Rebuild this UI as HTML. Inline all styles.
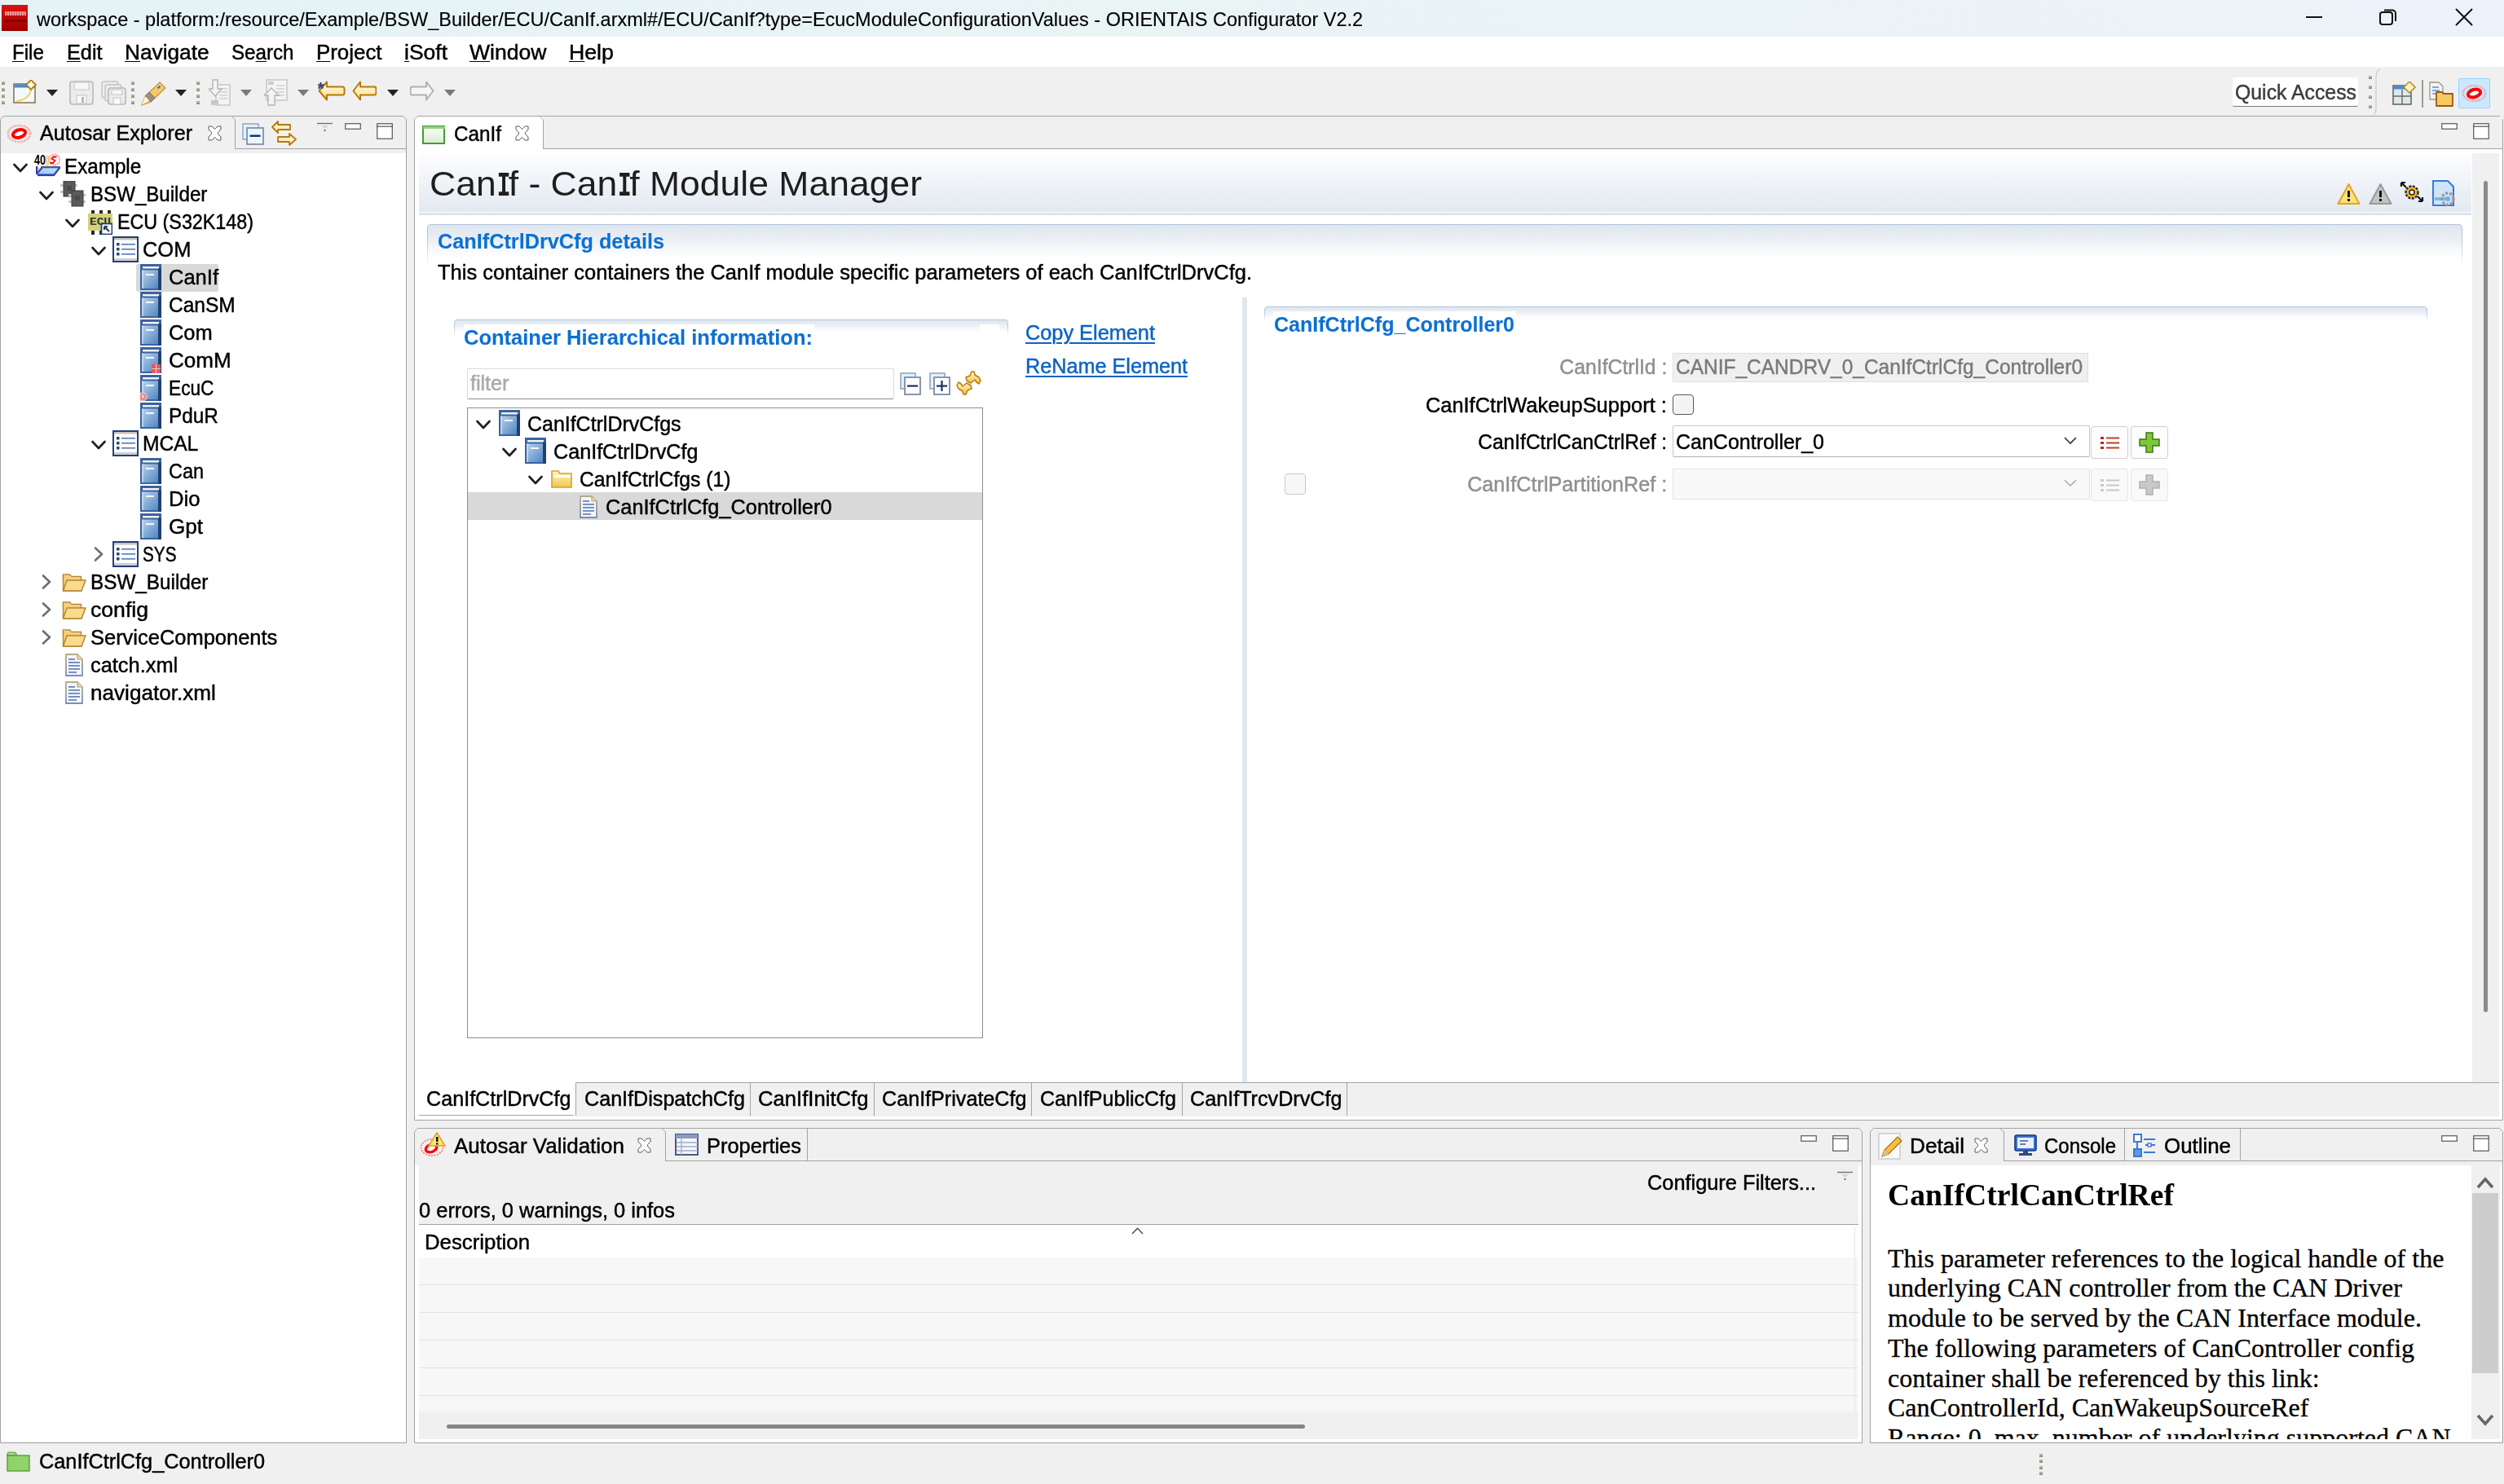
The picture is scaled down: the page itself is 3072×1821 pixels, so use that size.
<!DOCTYPE html>
<html><head><meta charset="utf-8"><title>ORIENTAIS Configurator</title><style>
html,body{margin:0;padding:0;}
body{width:3072px;height:1821px;position:relative;overflow:hidden;background:#f0f0f0;font-family:"Liberation Sans",sans-serif;}
body>div,body>svg{position:absolute;}
.t{position:absolute;white-space:pre;-webkit-text-stroke:0.45px currentColor;}
u{text-decoration-thickness:1.3px;text-underline-offset:1.5px;}
.mi{font-family:"Liberation Mono",monospace;font-weight:bold;letter-spacing:-9px;margin-left:-2px;display:inline-block;transform:scaleX(0.62);}
#t1{transform:scaleX(0.9783);}
#t2{transform:scaleX(0.9653);}
#t3{transform:scaleX(1.0094);}
#t4{transform:scaleX(1.0488);}
#t5{transform:scaleX(0.9655);}
#t6{transform:scaleX(1.0343);}
#t7{transform:scaleX(1.0590);}
#t8{transform:scaleX(1.0625);}
#t9{transform:scaleX(1.0673);}
#t10{transform:scaleX(0.9929);}
#t11{transform:scaleX(1.0043);}
#t12{transform:scaleX(0.9685);}
#t13{transform:scaleX(0.9639);}
#t14{transform:scaleX(0.9311);}
#t15{transform:scaleX(1.0167);}
#t16{transform:scaleX(1.0207);}
#t17{transform:scaleX(0.9799);}
#t18{transform:scaleX(1.0171);}
#t19{transform:scaleX(1.0406);}
#t20{transform:scaleX(0.9077);}
#t21{transform:scaleX(0.9721);}
#t22{transform:scaleX(0.9832);}
#t23{transform:scaleX(0.9373);}
#t24{transform:scaleX(1.0262);}
#t25{transform:scaleX(1.0398);}
#t26{transform:scaleX(0.8295);}
#t27{transform:scaleX(0.9713);}
#t28{transform:scaleX(1.0642);}
#t29{transform:scaleX(1.0185);}
#t30{transform:scaleX(1.0152);}
#t31{transform:scaleX(1.0441);}
#t32{transform:scaleX(0.9705);}
#t33{transform:scaleX(1.0595);}
#t34{transform:scaleX(1.0107);}
#t35{transform:scaleX(1.0198);}
#t36{transform:scaleX(1.0202);}
#t38{transform:scaleX(0.9978);}
#t39{transform:scaleX(1.0061);}
#t40{transform:scaleX(0.9891);}
#t41{transform:scaleX(1.0138);}
#t42{transform:scaleX(1.0125);}
#t43{transform:scaleX(1.0086);}
#t44{transform:scaleX(1.0018);}
#t45{transform:scaleX(0.9897);}
#t46{transform:scaleX(0.9795);}
#t47{transform:scaleX(1.0176);}
#t48{transform:scaleX(0.9823);}
#t49{transform:scaleX(0.9997);}
#t50{transform:scaleX(1.0076);}
#t51{transform:scaleX(1.0061);}
#t52{transform:scaleX(1.0054);}
#t53{transform:scaleX(1.0264);}
#t54{transform:scaleX(1.0058);}
#t55{transform:scaleX(1.0015);}
#t56{transform:scaleX(1.0069);}
#t57{transform:scaleX(1.0395);}
#t58{transform:scaleX(1.0180);}
#t59{transform:scaleX(1.0135);}
#t60{transform:scaleX(1.0179);}
#t61{transform:scaleX(1.0315);}
#t62{transform:scaleX(1.0482);}
#t63{transform:scaleX(0.9593);}
#t64{transform:scaleX(1.0351);}
#dethead{transform:scaleX(0.9898);}
#t65{transform:scaleX(1.0120);}
</style></head><body>
<div style="left:0px;top:0px;width:3072px;height:45px;background:linear-gradient(90deg,#e5f3f6 0%,#e9f4f5 45%,#ecf2f9 100%)"></div>
<div style="left:2px;top:6px;width:32px;height:32px;background:linear-gradient(#e01010,#9a0000)"></div>
<div style="left:6px;top:14px;width:26px;height:5px;background:repeating-linear-gradient(90deg,#f7c8c8 0 2px,#e26a6a 2px 3px);opacity:.75"></div>
<div style="left:6px;top:24px;width:26px;height:3px;background:repeating-linear-gradient(90deg,#5a0000 0 2px,#a00000 2px 3px);opacity:.8"></div>
<div id="t1" class="t " style="left:45px;transform-origin:left top;top:11.68px;font-size:24px;line-height:24px;color:#000;font-weight:normal;font-family:'Liberation Sans', sans-serif;-webkit-text-stroke:0.15px currentColor">workspace - platform:/resource/Example/BSW_Builder/ECU/CanIf.arxml#/ECU/CanIf?type=EcucModuleConfigurationValues - ORIENTAIS Configurator V2.2</div>
<div style="left:2829px;top:20px;width:20px;height:2px;background:#111"></div>
<svg style="position:absolute;left:2918px;top:9px;" width="24" height="24" viewBox="0 0 24 24"><rect x="2" y="6" width="15" height="15" rx="3" fill="none" stroke="#111" stroke-width="2"/><path d="M7,3.5 H17 a4,4 0 0 1 4,4 V17" fill="none" stroke="#111" stroke-width="2"/></svg>
<svg style="position:absolute;left:3012px;top:10px;" width="22" height="22" viewBox="0 0 22 22"><path d="M1,1 L21,21 M21,1 L1,21" stroke="#111" stroke-width="2"/></svg>
<div style="left:0px;top:45px;width:3072px;height:37px;background:#fff"></div>
<div id="t2" class="t " style="left:14.5px;transform-origin:left top;top:52.14px;font-size:25px;line-height:25px;color:#000;font-weight:normal;font-family:'Liberation Sans', sans-serif;"><u>F</u>ile</div>
<div id="t3" class="t " style="left:81.5px;transform-origin:left top;top:52.14px;font-size:25px;line-height:25px;color:#000;font-weight:normal;font-family:'Liberation Sans', sans-serif;"><u>E</u>dit</div>
<div id="t4" class="t " style="left:152.7px;transform-origin:left top;top:52.14px;font-size:25px;line-height:25px;color:#000;font-weight:normal;font-family:'Liberation Sans', sans-serif;"><u>N</u>avigate</div>
<div id="t5" class="t " style="left:283.7px;transform-origin:left top;top:52.14px;font-size:25px;line-height:25px;color:#000;font-weight:normal;font-family:'Liberation Sans', sans-serif;">Se<u>a</u>rch</div>
<div id="t6" class="t " style="left:388px;transform-origin:left top;top:52.14px;font-size:25px;line-height:25px;color:#000;font-weight:normal;font-family:'Liberation Sans', sans-serif;"><u>P</u>roject</div>
<div id="t7" class="t " style="left:496px;transform-origin:left top;top:52.14px;font-size:25px;line-height:25px;color:#000;font-weight:normal;font-family:'Liberation Sans', sans-serif;"><u>i</u>Soft</div>
<div id="t8" class="t " style="left:576px;transform-origin:left top;top:52.14px;font-size:25px;line-height:25px;color:#000;font-weight:normal;font-family:'Liberation Sans', sans-serif;"><u>W</u>indow</div>
<div id="t9" class="t " style="left:698px;transform-origin:left top;top:52.14px;font-size:25px;line-height:25px;color:#000;font-weight:normal;font-family:'Liberation Sans', sans-serif;"><u>H</u>elp</div>
<div style="left:0px;top:82px;width:3072px;height:1739px;background:#f0f0f0"></div>
<div style="left:2px;top:100px;width:4px;height:4px;background:linear-gradient(#c4bfae,#8a8470)"></div>
<div style="left:2px;top:108px;width:4px;height:4px;background:linear-gradient(#c4bfae,#8a8470)"></div>
<div style="left:2px;top:116px;width:4px;height:4px;background:linear-gradient(#c4bfae,#8a8470)"></div>
<div style="left:2px;top:124px;width:4px;height:4px;background:linear-gradient(#c4bfae,#8a8470)"></div>
<svg style="position:absolute;left:16px;top:98px;" width="30" height="30" viewBox="0 0 30 30"><rect x="1" y="5" width="26" height="23" fill="#f4f9fe" stroke="#8a7a50" stroke-width="1.6"/><rect x="1.5" y="5.5" width="25" height="4" fill="#4a8ad0"/><path d="M4,26 Q20,24 22,12" fill="none" stroke="#f0d070" stroke-width="2"/><path d="M22,0 L28,6 L22,12 L16,6 Z" fill="#f5dc8c" stroke="#a07a18" stroke-width="1.6"/><path d="M22,2.5 V9.5 M18.5,6 H25.5" stroke="#fff" stroke-width="1.6"/></svg>
<svg style="position:absolute;left:57px;top:110px;" width="14" height="8" viewBox="0 0 14 8"><polygon points="0,0 14,0 7.0,8" fill="#222"/></svg>
<svg style="position:absolute;left:85px;top:99px;" width="30" height="30" viewBox="0 0 30 30"><rect x="1" y="1" width="28" height="28" rx="3" fill="#ececec" stroke="#b8b8b8" stroke-width="1.6"/><rect x="6" y="2" width="18" height="9" fill="#f7f7f7" stroke="#c4c4c4"/><rect x="9" y="18" width="12" height="10" fill="#f8f8f8" stroke="#c4c4c4"/><rect x="15" y="20" width="3" height="7" fill="#bbb"/></svg>
<svg style="position:absolute;left:124px;top:99px;" width="31" height="30" viewBox="0 0 31 30"><rect x="1" y="1" width="20" height="20" rx="3" fill="#ececec" stroke="#c4c4c4" stroke-width="1.4"/><rect x="5" y="5" width="20" height="20" rx="3" fill="#ececec" stroke="#c4c4c4" stroke-width="1.4"/><rect x="9" y="9" width="21" height="20" rx="3" fill="#ececec" stroke="#b8b8b8" stroke-width="1.6"/><rect x="13" y="11" width="13" height="6" fill="#f7f7f7" stroke="#c4c4c4"/><rect x="15" y="21" width="9" height="8" fill="#f8f8f8" stroke="#c4c4c4"/></svg>
<div style="left:161px;top:100px;width:4px;height:4px;background:linear-gradient(#c4bfae,#8a8470)"></div>
<div style="left:161px;top:108px;width:4px;height:4px;background:linear-gradient(#c4bfae,#8a8470)"></div>
<div style="left:161px;top:116px;width:4px;height:4px;background:linear-gradient(#c4bfae,#8a8470)"></div>
<div style="left:161px;top:124px;width:4px;height:4px;background:linear-gradient(#c4bfae,#8a8470)"></div>
<svg style="position:absolute;left:172px;top:98px;" width="33" height="32" viewBox="0 0 33 32"><path d="M2,31 L6,20 L24,3 L31,10 L13,27 Z" fill="#f5c86a" stroke="#c09040" stroke-width="1.2"/><path d="M6,20 L13,27 L18,22 L11,15 Z" fill="#9a9088" stroke="#776f68" stroke-width="1"/><path d="M2,31 L6,20 L11,25 Z" fill="#fff8d8"/><rect x="22" y="7" width="2" height="4" fill="#3060c0" transform="rotate(45 23 9)"/></svg>
<svg style="position:absolute;left:215px;top:110px;" width="14" height="8" viewBox="0 0 14 8"><polygon points="0,0 14,0 7.0,8" fill="#222"/></svg>
<div style="left:241px;top:100px;width:4px;height:4px;background:linear-gradient(#c4bfae,#8a8470)"></div>
<div style="left:241px;top:108px;width:4px;height:4px;background:linear-gradient(#c4bfae,#8a8470)"></div>
<div style="left:241px;top:116px;width:4px;height:4px;background:linear-gradient(#c4bfae,#8a8470)"></div>
<div style="left:241px;top:124px;width:4px;height:4px;background:linear-gradient(#c4bfae,#8a8470)"></div>
<svg style="position:absolute;left:256px;top:97px;" width="27" height="33" viewBox="0 0 27 33"><rect x="9" y="7" width="17" height="25" fill="#f4f4f4" stroke="#c4c4c4" stroke-width="1.4"/><path d="M13,12 h10 M13,16 h10 M13,20 h10 M13,24 h10" stroke="#d0d0d0" stroke-width="1.4"/><path d="M5,1 h6 v11 h5 l-8,9 l-8,-9 h5 Z" fill="#f4f4f4" stroke="#b4b4b4" stroke-width="1.4"/><rect x="3" y="26" width="9" height="6" fill="#c8c8c8"/></svg>
<svg style="position:absolute;left:295px;top:110px;" width="14" height="8" viewBox="0 0 14 8"><polygon points="0,0 14,0 7.0,8" fill="#7a7a7a"/></svg>
<svg style="position:absolute;left:324px;top:97px;" width="29" height="33" viewBox="0 0 29 33"><rect x="3" y="1" width="25" height="25" fill="#f4f4f4" stroke="#c4c4c4" stroke-width="1.4"/><rect x="5" y="3" width="7" height="4" fill="#ccc"/><path d="M15,8 h10 M15,12 h10 M15,16 h10 M15,20 h10" stroke="#d0d0d0" stroke-width="1.4"/><path d="M5,32 v-12 h-5 l9,-9 l9,9 h-5 v12 Z" fill="#f4f4f4" stroke="#b4b4b4" stroke-width="1.4"/></svg>
<svg style="position:absolute;left:365px;top:110px;" width="14" height="8" viewBox="0 0 14 8"><polygon points="0,0 14,0 7.0,8" fill="#7a7a7a"/></svg>
<svg style="position:absolute;left:390px;top:99px;" width="34" height="27" viewBox="0 0 34 27"><defs><linearGradient id="ag" x1="0" y1="0" x2="0" y2="1"><stop offset="0" stop-color="#fffbe8"/><stop offset="1" stop-color="#ffe08a"/></linearGradient></defs><path d="M11,1.5 L1.5,12.5 L11,23.5 V17.5 H30 Q32.5,17.5 32.5,15 V10 Q32.5,7.5 30,7.5 H11 Z" fill="url(#ag)" stroke="#b8780a" stroke-width="2" stroke-linejoin="round"/><text x="-1" y="17" font-family="Liberation Sans" font-size="22" font-weight="bold" fill="#2a4a8a">*</text></svg>
<svg style="position:absolute;left:432px;top:99px;" width="30" height="27" viewBox="0 0 30 27"><path d="M10,1.5 L1.5,12.5 L10,23.5 V17.5 H27 Q29.5,17.5 29.5,15 V10 Q29.5,7.5 27,7.5 H10 Z" fill="url(#ag)" stroke="#b8780a" stroke-width="2" stroke-linejoin="round"/></svg>
<svg style="position:absolute;left:475px;top:110px;" width="14" height="8" viewBox="0 0 14 8"><polygon points="0,0 14,0 7.0,8" fill="#222"/></svg>
<svg style="position:absolute;left:503px;top:99px;" width="30" height="27" viewBox="0 0 30 27"><path d="M20,1.5 L28.5,12.5 L20,23.5 V17.5 H3 Q0.5,17.5 0.5,15 V10 Q0.5,7.5 3,7.5 H20 Z" fill="#f6f6f6" stroke="#b0b0b0" stroke-width="2" stroke-linejoin="round"/></svg>
<svg style="position:absolute;left:545px;top:110px;" width="14" height="8" viewBox="0 0 14 8"><polygon points="0,0 14,0 7.0,8" fill="#7a7a7a"/></svg>
<div style="left:2739px;top:95px;width:154px;height:36px;background:#fff;border-bottom:1.5px solid #7a7a7a;box-sizing:border-box;border-radius:2px"></div>
<div id="t10" class="t " style="left:2742px;transform-origin:left top;top:100.84px;font-size:25px;line-height:25px;color:#3c3c3c;font-weight:normal;font-family:'Liberation Sans', sans-serif;">Quick Access</div>
<div style="left:2906px;top:93px;width:4px;height:4px;background:linear-gradient(#c4bfae,#8a8470)"></div>
<div style="left:2906px;top:105px;width:4px;height:4px;background:linear-gradient(#c4bfae,#8a8470)"></div>
<div style="left:2906px;top:117px;width:4px;height:4px;background:linear-gradient(#c4bfae,#8a8470)"></div>
<div style="left:2906px;top:129px;width:4px;height:4px;background:linear-gradient(#c4bfae,#8a8470)"></div>
<svg style="position:absolute;left:2912px;top:84px;" width="10" height="58" viewBox="0 0 10 58"><path d="M8,1 Q3,3 3,10 V48 Q3,55 0,57" fill="none" stroke="#c8c8c8" stroke-width="1.2"/></svg>
<svg style="position:absolute;left:2935px;top:100px;" width="30" height="30" viewBox="0 0 30 30"><rect x="1" y="5" width="22" height="23" fill="#dbe8f4" stroke="#6a6a5a" stroke-width="1.6"/><rect x="1.5" y="5.5" width="21" height="4" fill="#4a8ad0"/><path d="M12,10 V28 M1,18 H23" stroke="#6a6a5a" stroke-width="1.4"/><path d="M21,0 L28,7 L21,14 L14,7 Z" fill="#fff3c0" stroke="#b08a20" stroke-width="1.5"/></svg>
<div style="left:2971px;top:98px;width:2px;height:34px;background:#9a9a9a"></div>
<svg style="position:absolute;left:2980px;top:100px;" width="31" height="31" viewBox="0 0 31 31"><path d="M1,1 H12 L17,6 V22 H1 Z" fill="#f0f3f8" stroke="#a09878" stroke-width="1.3"/><path d="M4,7 h8 M4,11 h9 M4,15 h9" stroke="#6a8acb" stroke-width="1.4"/><path d="M9,13 h7 l2,2 h11 v15 H9 Z" fill="#f6c860" stroke="#9a5a10" stroke-width="1.8" stroke-linejoin="round"/></svg>
<div style="left:3016px;top:96px;width:39px;height:37px;background:#cce8ff;border:1px solid #99d1ff;box-sizing:border-box;border-radius:2px"></div>
<svg style="position:absolute;left:3020px;top:103px;" width="31" height="23" viewBox="0 0 31 23"><ellipse cx="15.5" cy="11.5" rx="13.8" ry="9.5" fill="none" stroke="#f59a9a" stroke-width="2.4" stroke-dasharray="1.6 1.2"/><ellipse cx="15.5" cy="11.5" rx="7.8" ry="4.6" fill="#fff" stroke="#f00" stroke-width="4" transform="rotate(-15 15.5 11.5)"/></svg>
<svg style="position:absolute;left:0px;top:142px;" width="499" height="1629" viewBox="0 0 499 1629"><path d="M0.5,1628.5 V4.5 L4.5,0.5 H494.5 L498.5,4.5 V1628.5 Z" fill="#f0f0f0" stroke="#a3a3a3" stroke-width="1"/></svg>
<div style="left:1px;top:188px;width:497px;height:1581px;background:#fff"></div>
<svg style="position:absolute;left:280px;top:142px;" width="12" height="42" viewBox="0 0 12 42"><path d="M4,0.5 L8.5,5 V40.5" fill="none" stroke="#a3a3a3" stroke-width="1"/></svg>
<div style="left:288px;top:182px;width:210px;height:1px;background:#a3a3a3"></div>
<svg style="position:absolute;left:8px;top:152px;" width="31" height="24" viewBox="0 0 31 24"><ellipse cx="15.5" cy="12" rx="13.8" ry="10" fill="none" stroke="#f59a9a" stroke-width="2.4" stroke-dasharray="1.6 1.2"/><ellipse cx="15.5" cy="12" rx="7.8" ry="4.6" fill="#fff" stroke="#f00" stroke-width="4" transform="rotate(-15 15.5 12)"/></svg>
<div id="t11" class="t " style="left:49px;transform-origin:left top;top:151.34px;font-size:25px;line-height:25px;color:#000;font-weight:normal;font-family:'Liberation Sans', sans-serif;">Autosar Explorer</div>
<svg style="position:absolute;left:254px;top:154px;" width="19" height="19" viewBox="0 0 19 19"><path d="M2,1 L6,1 L9.5,4.5 L13,1 L17,1 L17,5 L13.5,8.5 L13.5,10.5 L17,14 L17,18 L13,18 L9.5,14.5 L6,18 L2,18 L2,14 L5.5,10.5 L5.5,8.5 L2,5 Z" fill="#fff" stroke="#5a5a5a" stroke-width="1.0"/></svg>
<svg style="position:absolute;left:297px;top:151px;" width="27" height="27" viewBox="0 0 27 27"><rect x="1" y="1" width="19" height="19" fill="#dff3ff" stroke="#9aa8c4" stroke-width="1.6"/><rect x="6" y="6" width="20" height="20" fill="#e8f6ff" stroke="#8090ad" stroke-width="1.8"/><rect x="9.5" y="14.5" width="13" height="2.4" fill="#0a2f66"/></svg>
<svg style="position:absolute;left:332px;top:147px;" width="33" height="33" viewBox="0 0 33 33"><path d="M9,2 L2,9 L9,16 V12 H24 V6 H9 Z" fill="#fff1c0" stroke="#b8780a" stroke-width="1.8" stroke-linejoin="round"/><path d="M23,17 L31,24 L23,31 V27 H9 V21 H23 Z" fill="#fff1c0" stroke="#b8780a" stroke-width="1.8" stroke-linejoin="round"/></svg>
<svg style="position:absolute;left:389px;top:150px;" width="19" height="13" viewBox="0 0 19 13"><line x1="0" y1="1.5" x2="19" y2="1.5" stroke="#707070" stroke-width="1.4"/><polygon points="5,4 14,4 9.5,8" fill="#d4d4d4"/><rect x="8.5" y="9" width="2" height="2" fill="#707070"/></svg>
<svg style="position:absolute;left:423px;top:151px;" width="20" height="8" viewBox="0 0 20 8"><rect x="0.75" y="0.75" width="18.5" height="6.5" fill="#fff" stroke="#555" stroke-width="1.2"/></svg>
<svg style="position:absolute;left:462px;top:151px;" width="20" height="20" viewBox="0 0 20 20"><rect x="0.75" y="0.75" width="18.5" height="18.5" fill="#fff" stroke="#555" stroke-width="1.2"/><line x1="0" y1="4.2" x2="20" y2="4.2" stroke="#555" stroke-width="1.2"/></svg>
<svg style="position:absolute;left:16px;top:200px;" width="18" height="13.5" viewBox="0 0 18 13.5"><polyline points="1.5,2 9.0,10.0 16.5,2" fill="none" stroke="#1f1f1f" stroke-width="2.6" stroke-linecap="round" stroke-linejoin="round"/></svg>
<svg style="position:absolute;left:42px;top:187px;" width="32" height="30" viewBox="0 0 32 30"><defs><linearGradient id="pg" x1="0" y1="1" x2="1" y2="0"><stop offset="0" stop-color="#9cc6f0"/><stop offset="1" stop-color="#b8e4fc"/></linearGradient></defs><rect x="14" y="4" width="4.5" height="13" fill="#f8dc98"/><text x="0" y="15" font-family="Liberation Sans" font-size="17" font-weight="bold" fill="#000" textLength="14" lengthAdjust="spacingAndGlyphs">40</text><circle cx="25" cy="9" r="6.5" fill="#fff" stroke="#ff8a8a" stroke-width="2.2" stroke-dasharray="1.6 1.1"/><path d="M27.5,5.5 h-4 l-2,2.5 l4,2 l-2.5,3 h-3.5" fill="none" stroke="#f00" stroke-width="1.8"/><polygon points="9,19.5 31,19.5 23,27 3,27" fill="url(#pg)"/><polygon points="3.5,19 8,19 3.5,24.5" fill="#f6d890"/><rect x="2" y="17" width="2.2" height="10" fill="#2c3fb0"/><rect x="8" y="17" width="24" height="2.4" fill="#4a55a0"/><line x1="9.5" y1="19" x2="3" y2="26.5" stroke="#3a48b0" stroke-width="2.2"/><line x1="31.5" y1="18.5" x2="24" y2="28" stroke="#3a48b0" stroke-width="2.4"/><rect x="4" y="26.5" width="21" height="2.6" fill="#2a3db8"/></svg>
<div id="t12" class="t " style="left:79px;transform-origin:left top;top:191.84px;font-size:25px;line-height:25px;color:#000;font-weight:normal;font-family:'Liberation Sans', sans-serif;">Example</div>
<svg style="position:absolute;left:48px;top:234px;" width="18" height="13.5" viewBox="0 0 18 13.5"><polyline points="1.5,2 9.0,10.0 16.5,2" fill="none" stroke="#1f1f1f" stroke-width="2.6" stroke-linecap="round" stroke-linejoin="round"/></svg>
<svg style="position:absolute;left:74px;top:222px;" width="32" height="32" viewBox="0 0 32 32"><rect x="0" y="4" width="4" height="3" fill="#c8c8c8"/><rect x="0" y="12" width="4" height="3" fill="#c8c8c8"/><rect x="17" y="4" width="4" height="3" fill="#c8c8c8"/><rect x="17" y="12" width="4" height="3" fill="#c8c8c8"/><rect x="4" y="0" width="14" height="19" fill="#5a5a5a" stroke="#3a3a3a" stroke-width="1"/><rect x="8" y="6" width="6" height="6" fill="#4a4a4a"/><rect x="10" y="16" width="4" height="3" fill="#c8c8c8"/><rect x="10" y="24" width="4" height="3" fill="#c8c8c8"/><rect x="27" y="16" width="4" height="3" fill="#c8c8c8"/><rect x="27" y="24" width="4" height="3" fill="#c8c8c8"/><rect x="14" y="12" width="14" height="19" fill="#5a5a5a" stroke="#3a3a3a" stroke-width="1"/><rect x="18" y="18" width="6" height="6" fill="#4a4a4a"/></svg>
<div id="t13" class="t " style="left:111px;transform-origin:left top;top:225.84px;font-size:25px;line-height:25px;color:#000;font-weight:normal;font-family:'Liberation Sans', sans-serif;">BSW_Builder</div>
<svg style="position:absolute;left:80px;top:268px;" width="18" height="13.5" viewBox="0 0 18 13.5"><polyline points="1.5,2 9.0,10.0 16.5,2" fill="none" stroke="#1f1f1f" stroke-width="2.6" stroke-linecap="round" stroke-linejoin="round"/></svg>
<svg style="position:absolute;left:108px;top:258px;" width="30" height="30" viewBox="0 0 30 30"><rect x="4" y="0" width="4" height="4" fill="#2a2a2a"/><rect x="14" y="0" width="4" height="4" fill="#2a2a2a"/><rect x="24" y="0" width="4" height="4" fill="#2a2a2a"/><rect x="4" y="25" width="4" height="5" fill="#2a2a2a"/><rect x="14" y="25" width="4" height="5" fill="#2a2a2a"/><rect x="0" y="4" width="30" height="21" fill="#d2d27a"/><text x="2" y="18" font-family="Liberation Mono" font-size="12" font-weight="bold" fill="#333" textLength="26" lengthAdjust="spacingAndGlyphs">ECU</text><rect x="16.5" y="16.5" width="13" height="13" fill="#fff" stroke="#22406e" stroke-width="1.8"/><path d="M20,20 L26,26 M20,20 h4 M20,20 v4" stroke="#22406e" stroke-width="2.2"/></svg>
<div id="t14" class="t " style="left:144px;transform-origin:left top;top:259.84px;font-size:25px;line-height:25px;color:#000;font-weight:normal;font-family:'Liberation Sans', sans-serif;">ECU (S32K148)</div>
<svg style="position:absolute;left:112px;top:302px;" width="18" height="13.5" viewBox="0 0 18 13.5"><polyline points="1.5,2 9.0,10.0 16.5,2" fill="none" stroke="#1f1f1f" stroke-width="2.6" stroke-linecap="round" stroke-linejoin="round"/></svg>
<svg style="position:absolute;left:138px;top:290px;" width="32" height="32" viewBox="0 0 32 32"><rect x="1" y="1" width="30" height="30" fill="#fff" stroke="#223f78" stroke-width="2"/><rect x="2" y="27" width="28" height="3" fill="#cfcfcf"/><rect x="2" y="2" width="28" height="2.5" fill="#c8c4bc"/><rect x="5" y="8" width="3.5" height="3.5" fill="#2c4577"/><rect x="11" y="9" width="17" height="1.6" fill="#5578b8"/><rect x="5" y="14" width="3.5" height="3.5" fill="#2c4577"/><rect x="11" y="15" width="17" height="1.6" fill="#5578b8"/><rect x="5" y="20" width="3.5" height="3.5" fill="#2c4577"/><rect x="11" y="21" width="17" height="1.6" fill="#5578b8"/></svg>
<div id="t15" class="t " style="left:175px;transform-origin:left top;top:293.84px;font-size:25px;line-height:25px;color:#000;font-weight:normal;font-family:'Liberation Sans', sans-serif;">COM</div>
<div style="left:167px;top:324px;width:101px;height:34px;background:#d9d9d9;border-radius:2px"></div>
<svg style="position:absolute;left:172px;top:324px;" width="26" height="32" viewBox="0 0 26 32"><defs><linearGradient id="mg" x1="0" y1="0" x2="1" y2="1"><stop offset="0" stop-color="#b9d3ec"/><stop offset="1" stop-color="#4f86c2"/></linearGradient></defs><rect x="0" y="0" width="26" height="32" fill="#3b62a0"/><rect x="2" y="7.5" width="20" height="22.5" fill="url(#mg)"/><rect x="2" y="7.5" width="2" height="22.5" fill="#cfe0f2" opacity=".7"/><rect x="3" y="3" width="20" height="2.5" fill="#eef3f8"/><rect x="7" y="12" width="10" height="2" fill="#f4f8fc"/><rect x="22" y="5.5" width="4" height="26.5" fill="#22406e"/></svg>
<div id="t16" class="t " style="left:207px;transform-origin:left top;top:327.84px;font-size:25px;line-height:25px;color:#000;font-weight:normal;font-family:'Liberation Sans', sans-serif;">CanIf</div>
<svg style="position:absolute;left:172px;top:358px;" width="26" height="32" viewBox="0 0 26 32"><defs><linearGradient id="mg" x1="0" y1="0" x2="1" y2="1"><stop offset="0" stop-color="#b9d3ec"/><stop offset="1" stop-color="#4f86c2"/></linearGradient></defs><rect x="0" y="0" width="26" height="32" fill="#3b62a0"/><rect x="2" y="7.5" width="20" height="22.5" fill="url(#mg)"/><rect x="2" y="7.5" width="2" height="22.5" fill="#cfe0f2" opacity=".7"/><rect x="3" y="3" width="20" height="2.5" fill="#eef3f8"/><rect x="7" y="12" width="10" height="2" fill="#f4f8fc"/><rect x="22" y="5.5" width="4" height="26.5" fill="#22406e"/></svg>
<div id="t17" class="t " style="left:207px;transform-origin:left top;top:361.84px;font-size:25px;line-height:25px;color:#000;font-weight:normal;font-family:'Liberation Sans', sans-serif;">CanSM</div>
<svg style="position:absolute;left:172px;top:392px;" width="26" height="32" viewBox="0 0 26 32"><defs><linearGradient id="mg" x1="0" y1="0" x2="1" y2="1"><stop offset="0" stop-color="#b9d3ec"/><stop offset="1" stop-color="#4f86c2"/></linearGradient></defs><rect x="0" y="0" width="26" height="32" fill="#3b62a0"/><rect x="2" y="7.5" width="20" height="22.5" fill="url(#mg)"/><rect x="2" y="7.5" width="2" height="22.5" fill="#cfe0f2" opacity=".7"/><rect x="3" y="3" width="20" height="2.5" fill="#eef3f8"/><rect x="7" y="12" width="10" height="2" fill="#f4f8fc"/><rect x="22" y="5.5" width="4" height="26.5" fill="#22406e"/></svg>
<div id="t18" class="t " style="left:207px;transform-origin:left top;top:395.84px;font-size:25px;line-height:25px;color:#000;font-weight:normal;font-family:'Liberation Sans', sans-serif;">Com</div>
<svg style="position:absolute;left:172px;top:426px;" width="26" height="32" viewBox="0 0 26 32"><defs><linearGradient id="mg" x1="0" y1="0" x2="1" y2="1"><stop offset="0" stop-color="#b9d3ec"/><stop offset="1" stop-color="#4f86c2"/></linearGradient></defs><rect x="0" y="0" width="26" height="32" fill="#3b62a0"/><rect x="2" y="7.5" width="20" height="22.5" fill="url(#mg)"/><rect x="2" y="7.5" width="2" height="22.5" fill="#cfe0f2" opacity=".7"/><rect x="3" y="3" width="20" height="2.5" fill="#eef3f8"/><rect x="7" y="12" width="10" height="2" fill="#f4f8fc"/><rect x="22" y="5.5" width="4" height="26.5" fill="#22406e"/><g transform="translate(14,21)"><rect x="0" y="0" width="11" height="11" fill="#e05a5a"/><path d="M5.5,0 V11 M0,5.5 H11" stroke="#f7c0c0" stroke-width="1.2"/></g></svg>
<div id="t19" class="t " style="left:207px;transform-origin:left top;top:429.84px;font-size:25px;line-height:25px;color:#000;font-weight:normal;font-family:'Liberation Sans', sans-serif;">ComM</div>
<svg style="position:absolute;left:172px;top:460px;" width="26" height="32" viewBox="0 0 26 32"><defs><linearGradient id="mg" x1="0" y1="0" x2="1" y2="1"><stop offset="0" stop-color="#b9d3ec"/><stop offset="1" stop-color="#4f86c2"/></linearGradient></defs><rect x="0" y="0" width="26" height="32" fill="#3b62a0"/><rect x="2" y="7.5" width="20" height="22.5" fill="url(#mg)"/><rect x="2" y="7.5" width="2" height="22.5" fill="#cfe0f2" opacity=".7"/><rect x="3" y="3" width="20" height="2.5" fill="#eef3f8"/><rect x="7" y="12" width="10" height="2" fill="#f4f8fc"/><rect x="22" y="5.5" width="4" height="26.5" fill="#22406e"/><circle cx="3" cy="27" r="5.2" fill="#e88" stroke="#fff" stroke-width="0.6"/><path d="M3,24 V27.5 H5" stroke="#fff" stroke-width="1.1" fill="none"/></svg>
<div id="t20" class="t " style="left:207px;transform-origin:left top;top:463.84px;font-size:25px;line-height:25px;color:#000;font-weight:normal;font-family:'Liberation Sans', sans-serif;">EcuC</div>
<svg style="position:absolute;left:172px;top:494px;" width="26" height="32" viewBox="0 0 26 32"><defs><linearGradient id="mg" x1="0" y1="0" x2="1" y2="1"><stop offset="0" stop-color="#b9d3ec"/><stop offset="1" stop-color="#4f86c2"/></linearGradient></defs><rect x="0" y="0" width="26" height="32" fill="#3b62a0"/><rect x="2" y="7.5" width="20" height="22.5" fill="url(#mg)"/><rect x="2" y="7.5" width="2" height="22.5" fill="#cfe0f2" opacity=".7"/><rect x="3" y="3" width="20" height="2.5" fill="#eef3f8"/><rect x="7" y="12" width="10" height="2" fill="#f4f8fc"/><rect x="22" y="5.5" width="4" height="26.5" fill="#22406e"/></svg>
<div id="t21" class="t " style="left:207px;transform-origin:left top;top:497.84px;font-size:25px;line-height:25px;color:#000;font-weight:normal;font-family:'Liberation Sans', sans-serif;">PduR</div>
<svg style="position:absolute;left:112px;top:540px;" width="18" height="13.5" viewBox="0 0 18 13.5"><polyline points="1.5,2 9.0,10.0 16.5,2" fill="none" stroke="#1f1f1f" stroke-width="2.6" stroke-linecap="round" stroke-linejoin="round"/></svg>
<svg style="position:absolute;left:138px;top:528px;" width="32" height="32" viewBox="0 0 32 32"><rect x="1" y="1" width="30" height="30" fill="#fff" stroke="#223f78" stroke-width="2"/><rect x="2" y="27" width="28" height="3" fill="#cfcfcf"/><rect x="2" y="2" width="28" height="2.5" fill="#c8c4bc"/><rect x="5" y="8" width="3.5" height="3.5" fill="#2c4577"/><rect x="11" y="9" width="17" height="1.6" fill="#5578b8"/><rect x="5" y="14" width="3.5" height="3.5" fill="#2c4577"/><rect x="11" y="15" width="17" height="1.6" fill="#5578b8"/><rect x="5" y="20" width="3.5" height="3.5" fill="#2c4577"/><rect x="11" y="21" width="17" height="1.6" fill="#5578b8"/></svg>
<div id="t22" class="t " style="left:175px;transform-origin:left top;top:531.84px;font-size:25px;line-height:25px;color:#000;font-weight:normal;font-family:'Liberation Sans', sans-serif;">MCAL</div>
<svg style="position:absolute;left:172px;top:562px;" width="26" height="32" viewBox="0 0 26 32"><defs><linearGradient id="mg" x1="0" y1="0" x2="1" y2="1"><stop offset="0" stop-color="#b9d3ec"/><stop offset="1" stop-color="#4f86c2"/></linearGradient></defs><rect x="0" y="0" width="26" height="32" fill="#3b62a0"/><rect x="2" y="7.5" width="20" height="22.5" fill="url(#mg)"/><rect x="2" y="7.5" width="2" height="22.5" fill="#cfe0f2" opacity=".7"/><rect x="3" y="3" width="20" height="2.5" fill="#eef3f8"/><rect x="7" y="12" width="10" height="2" fill="#f4f8fc"/><rect x="22" y="5.5" width="4" height="26.5" fill="#22406e"/></svg>
<div id="t23" class="t " style="left:207px;transform-origin:left top;top:565.84px;font-size:25px;line-height:25px;color:#000;font-weight:normal;font-family:'Liberation Sans', sans-serif;">Can</div>
<svg style="position:absolute;left:172px;top:596px;" width="26" height="32" viewBox="0 0 26 32"><defs><linearGradient id="mg" x1="0" y1="0" x2="1" y2="1"><stop offset="0" stop-color="#b9d3ec"/><stop offset="1" stop-color="#4f86c2"/></linearGradient></defs><rect x="0" y="0" width="26" height="32" fill="#3b62a0"/><rect x="2" y="7.5" width="20" height="22.5" fill="url(#mg)"/><rect x="2" y="7.5" width="2" height="22.5" fill="#cfe0f2" opacity=".7"/><rect x="3" y="3" width="20" height="2.5" fill="#eef3f8"/><rect x="7" y="12" width="10" height="2" fill="#f4f8fc"/><rect x="22" y="5.5" width="4" height="26.5" fill="#22406e"/></svg>
<div id="t24" class="t " style="left:207px;transform-origin:left top;top:599.84px;font-size:25px;line-height:25px;color:#000;font-weight:normal;font-family:'Liberation Sans', sans-serif;">Dio</div>
<svg style="position:absolute;left:172px;top:630px;" width="26" height="32" viewBox="0 0 26 32"><defs><linearGradient id="mg" x1="0" y1="0" x2="1" y2="1"><stop offset="0" stop-color="#b9d3ec"/><stop offset="1" stop-color="#4f86c2"/></linearGradient></defs><rect x="0" y="0" width="26" height="32" fill="#3b62a0"/><rect x="2" y="7.5" width="20" height="22.5" fill="url(#mg)"/><rect x="2" y="7.5" width="2" height="22.5" fill="#cfe0f2" opacity=".7"/><rect x="3" y="3" width="20" height="2.5" fill="#eef3f8"/><rect x="7" y="12" width="10" height="2" fill="#f4f8fc"/><rect x="22" y="5.5" width="4" height="26.5" fill="#22406e"/></svg>
<div id="t25" class="t " style="left:207px;transform-origin:left top;top:633.84px;font-size:25px;line-height:25px;color:#000;font-weight:normal;font-family:'Liberation Sans', sans-serif;">Gpt</div>
<svg style="position:absolute;left:115px;top:671px;" width="13.5" height="18" viewBox="0 0 13.5 18"><polyline points="2,1.5 10.0,9.0 2,16.5" fill="none" stroke="#6e6e6e" stroke-width="2.6" stroke-linecap="round" stroke-linejoin="round"/></svg>
<svg style="position:absolute;left:138px;top:664px;" width="32" height="32" viewBox="0 0 32 32"><rect x="1" y="1" width="30" height="30" fill="#fff" stroke="#223f78" stroke-width="2"/><rect x="2" y="27" width="28" height="3" fill="#cfcfcf"/><rect x="2" y="2" width="28" height="2.5" fill="#c8c4bc"/><rect x="5" y="8" width="3.5" height="3.5" fill="#2c4577"/><rect x="11" y="9" width="17" height="1.6" fill="#5578b8"/><rect x="5" y="14" width="3.5" height="3.5" fill="#2c4577"/><rect x="11" y="15" width="17" height="1.6" fill="#5578b8"/><rect x="5" y="20" width="3.5" height="3.5" fill="#2c4577"/><rect x="11" y="21" width="17" height="1.6" fill="#5578b8"/></svg>
<div id="t26" class="t " style="left:175px;transform-origin:left top;top:667.84px;font-size:25px;line-height:25px;color:#000;font-weight:normal;font-family:'Liberation Sans', sans-serif;">SYS</div>
<svg style="position:absolute;left:51px;top:705px;" width="13.5" height="18" viewBox="0 0 13.5 18"><polyline points="2,1.5 10.0,9.0 2,16.5" fill="none" stroke="#6e6e6e" stroke-width="2.6" stroke-linecap="round" stroke-linejoin="round"/></svg>
<svg style="position:absolute;left:76px;top:701px;" width="30" height="26" viewBox="0 0 30 26"><path d="M1.5,4 h8 l2,2.5 h12 v4 H1.5 Z" fill="#f6dc9c" stroke="#b9832f" stroke-width="1.4"/><path d="M1.5,4 V24 H24 V10" fill="#f3d17e" stroke="#b9832f" stroke-width="1.4"/><path d="M6,11 H29 L24,24 H1.5 Z" fill="#f8dc8c" stroke="#b9832f" stroke-width="1.5" stroke-linejoin="round"/></svg>
<div id="t27" class="t " style="left:111px;transform-origin:left top;top:701.84px;font-size:25px;line-height:25px;color:#000;font-weight:normal;font-family:'Liberation Sans', sans-serif;">BSW_Builder</div>
<svg style="position:absolute;left:51px;top:739px;" width="13.5" height="18" viewBox="0 0 13.5 18"><polyline points="2,1.5 10.0,9.0 2,16.5" fill="none" stroke="#6e6e6e" stroke-width="2.6" stroke-linecap="round" stroke-linejoin="round"/></svg>
<svg style="position:absolute;left:76px;top:735px;" width="30" height="26" viewBox="0 0 30 26"><path d="M1.5,4 h8 l2,2.5 h12 v4 H1.5 Z" fill="#f6dc9c" stroke="#b9832f" stroke-width="1.4"/><path d="M1.5,4 V24 H24 V10" fill="#f3d17e" stroke="#b9832f" stroke-width="1.4"/><path d="M6,11 H29 L24,24 H1.5 Z" fill="#f8dc8c" stroke="#b9832f" stroke-width="1.5" stroke-linejoin="round"/></svg>
<div id="t28" class="t " style="left:111px;transform-origin:left top;top:735.84px;font-size:25px;line-height:25px;color:#000;font-weight:normal;font-family:'Liberation Sans', sans-serif;">config</div>
<svg style="position:absolute;left:51px;top:773px;" width="13.5" height="18" viewBox="0 0 13.5 18"><polyline points="2,1.5 10.0,9.0 2,16.5" fill="none" stroke="#6e6e6e" stroke-width="2.6" stroke-linecap="round" stroke-linejoin="round"/></svg>
<svg style="position:absolute;left:76px;top:769px;" width="30" height="26" viewBox="0 0 30 26"><path d="M1.5,4 h8 l2,2.5 h12 v4 H1.5 Z" fill="#f6dc9c" stroke="#b9832f" stroke-width="1.4"/><path d="M1.5,4 V24 H24 V10" fill="#f3d17e" stroke="#b9832f" stroke-width="1.4"/><path d="M6,11 H29 L24,24 H1.5 Z" fill="#f8dc8c" stroke="#b9832f" stroke-width="1.5" stroke-linejoin="round"/></svg>
<div id="t29" class="t " style="left:111px;transform-origin:left top;top:769.84px;font-size:25px;line-height:25px;color:#000;font-weight:normal;font-family:'Liberation Sans', sans-serif;">ServiceComponents</div>
<svg style="position:absolute;left:80px;top:802px;" width="22" height="28" viewBox="0 0 22 28"><defs><linearGradient id="fgr" x1="0" y1="0" x2="0" y2="1"><stop offset="0" stop-color="#b5ad8a"/><stop offset="1" stop-color="#7d8fb5"/></linearGradient></defs><path d="M1,1 H15 L21,7 V27 H1 Z" fill="#f4f6fb" stroke="url(#fgr)" stroke-width="1.8"/><path d="M15,1 V7 H21" fill="#e8d7a8" stroke="#c2a460" stroke-width="1.1"/><rect x="4" y="6" width="8" height="1.8" fill="#6a86bb"/><rect x="4" y="10" width="14" height="1.8" fill="#6a86bb"/><rect x="4" y="14" width="14" height="1.8" fill="#6a86bb"/><rect x="4" y="18" width="14" height="1.8" fill="#6a86bb"/><rect x="4" y="22" width="10" height="1.8" fill="#6a86bb"/></svg>
<div id="t30" class="t " style="left:111px;transform-origin:left top;top:803.84px;font-size:25px;line-height:25px;color:#000;font-weight:normal;font-family:'Liberation Sans', sans-serif;">catch.xml</div>
<svg style="position:absolute;left:80px;top:836px;" width="22" height="28" viewBox="0 0 22 28"><defs><linearGradient id="fgr" x1="0" y1="0" x2="0" y2="1"><stop offset="0" stop-color="#b5ad8a"/><stop offset="1" stop-color="#7d8fb5"/></linearGradient></defs><path d="M1,1 H15 L21,7 V27 H1 Z" fill="#f4f6fb" stroke="url(#fgr)" stroke-width="1.8"/><path d="M15,1 V7 H21" fill="#e8d7a8" stroke="#c2a460" stroke-width="1.1"/><rect x="4" y="6" width="8" height="1.8" fill="#6a86bb"/><rect x="4" y="10" width="14" height="1.8" fill="#6a86bb"/><rect x="4" y="14" width="14" height="1.8" fill="#6a86bb"/><rect x="4" y="18" width="14" height="1.8" fill="#6a86bb"/><rect x="4" y="22" width="10" height="1.8" fill="#6a86bb"/></svg>
<div id="t31" class="t " style="left:111px;transform-origin:left top;top:837.84px;font-size:25px;line-height:25px;color:#000;font-weight:normal;font-family:'Liberation Sans', sans-serif;">navigator.xml</div>
<svg style="position:absolute;left:508px;top:142px;" width="2563" height="1233" viewBox="0 0 2563 1233"><path d="M0.5,1232.5 V4.5 L4.5,0.5 H2558.5 L2562.5,4.5 V1232.5 Z" fill="#fff" stroke="#a3a3a3" stroke-width="1"/></svg>
<div style="left:667px;top:143px;width:2403px;height:39px;background:#f0f0f0"></div>
<div style="left:666px;top:182px;width:2404px;height:1px;background:#a3a3a3"></div>
<svg style="position:absolute;left:658px;top:142px;" width="10" height="42" viewBox="0 0 10 42"><path d="M0,0.5 L4,0.5 L8.5,5 V40.5" fill="none" stroke="#a3a3a3" stroke-width="1"/></svg>
<svg style="position:absolute;left:518px;top:154px;" width="29" height="23" viewBox="0 0 29 23"><defs><linearGradient id="gt" x1="0" y1="0" x2="0" y2="1"><stop offset="0" stop-color="#ffffff"/><stop offset="1" stop-color="#d6ecd0"/></linearGradient></defs><rect x="1" y="1" width="26" height="21" fill="url(#gt)" stroke="#4a9a3a" stroke-width="2"/><rect x="1" y="1" width="27" height="3" fill="#8fd37a"/></svg>
<div id="t32" class="t " style="left:557px;transform-origin:left top;top:151.84px;font-size:25px;line-height:25px;color:#000;font-weight:normal;font-family:'Liberation Sans', sans-serif;">CanIf</div>
<svg style="position:absolute;left:631px;top:154px;" width="19" height="19" viewBox="0 0 19 19"><path d="M2,1 L6,1 L9.5,4.5 L13,1 L17,1 L17,5 L13.5,8.5 L13.5,10.5 L17,14 L17,18 L13,18 L9.5,14.5 L6,18 L2,18 L2,14 L5.5,10.5 L5.5,8.5 L2,5 Z" fill="#fff" stroke="#5a5a5a" stroke-width="1.0"/></svg>
<svg style="position:absolute;left:2995px;top:151px;" width="20" height="8" viewBox="0 0 20 8"><rect x="0.75" y="0.75" width="18.5" height="6.5" fill="#fff" stroke="#555" stroke-width="1.2"/></svg>
<svg style="position:absolute;left:3034px;top:151px;" width="20" height="20" viewBox="0 0 20 20"><rect x="0.75" y="0.75" width="18.5" height="18.5" fill="#fff" stroke="#555" stroke-width="1.2"/><line x1="0" y1="4.2" x2="20" y2="4.2" stroke="#555" stroke-width="1.2"/></svg>
<div style="left:514px;top:186px;width:2518px;height:74px;background:linear-gradient(#ffffff 0%,#f4f6fa 35%,#e3e9f1 100%)"></div>
<div style="left:514px;top:261px;width:2518px;height:3px;background:#dce4ee"></div>
<div id="t33" class="t " style="left:527px;transform-origin:left top;top:204.95px;font-size:42px;line-height:42px;color:#1e1e1e;font-weight:normal;font-family:'Liberation Sans', sans-serif;-webkit-text-stroke:0">Can<span class="mi">I</span>f - Can<span class="mi">I</span>f Module Manager</div>
<svg style="position:absolute;left:2867px;top:224px;" width="29" height="28" viewBox="0 0 29 28"><path d="M14.5,2 L27.5,26 H1.5 Z" fill="#fbe27a" stroke="#e8a020" stroke-width="2" stroke-linejoin="round"/><rect x="13" y="10" width="3" height="8" fill="#111"/><rect x="13" y="20" width="3" height="3" fill="#111"/></svg>
<svg style="position:absolute;left:2906px;top:224px;" width="29" height="28" viewBox="0 0 29 28"><path d="M14.5,2 L27.5,26 H1.5 Z" fill="#c4c4c4" stroke="#9a9a9a" stroke-width="2" stroke-linejoin="round"/><rect x="13" y="10" width="3" height="8" fill="#111"/><rect x="13" y="20" width="3" height="3" fill="#111"/></svg>
<svg style="position:absolute;left:2944px;top:222px;" width="30" height="30" viewBox="0 0 30 30"><circle cx="15" cy="14" r="7.5" fill="#f5b820" stroke="#2a2a50" stroke-width="2.5" stroke-dasharray="3 1.5"/><circle cx="15" cy="14" r="3" fill="#fff" stroke="#222" stroke-width="1.5"/><path d="M2,2 L8,8 M2,2 h5 M2,2 v5" stroke="#111" stroke-width="2.2"/><path d="M28,25 L22,19 M28,25 h-5 M28,25 v-5" stroke="#111" stroke-width="2.2"/></svg>
<svg style="position:absolute;left:2984px;top:221px;" width="29" height="32" viewBox="0 0 29 32"><path d="M1,1 H19 L26,8 V31 H1 Z" fill="#cfe4f8" stroke="#3a7ad0" stroke-width="2"/><rect x="3" y="21" width="18" height="4" fill="#7ab8ee"/><circle cx="19" cy="23" r="7" fill="none" stroke="#9a9a9a" stroke-width="3.5" stroke-dasharray="3 2"/><circle cx="19" cy="23" r="3" fill="#6ab0f0"/></svg>
<div style="left:3033px;top:188px;width:33px;height:1140px;background:#f0f0f0"></div>
<div style="left:3047px;top:222px;width:5px;height:1020px;background:#8a8a8a;border-radius:3px"></div>
<div style="left:524px;top:275px;width:2497px;height:52px;border:1px solid #b4c6dd;border-bottom:none;border-top-left-radius:4px;border-top-right-radius:4px;box-sizing:border-box;-webkit-mask-image:linear-gradient(#000 0%,#000 40%,transparent 100%);background:linear-gradient(#dfe6ef 0px,#f3f6fa 31px,#fff 44px)"></div>
<div id="t34" class="t " style="left:537px;transform-origin:left top;top:283.84px;font-size:25px;line-height:25px;color:#0c70d2;font-weight:bold;font-family:'Liberation Sans', sans-serif;-webkit-text-stroke:0.1px currentColor;">CanIfCtrlDrvCfg details</div>
<div id="t35" class="t " style="left:537px;transform-origin:left top;top:321.84px;font-size:25px;line-height:25px;color:#000;font-weight:normal;font-family:'Liberation Sans', sans-serif;">This container containers the CanIf module specific parameters of each CanIfCtrlDrvCfg.</div>
<div style="left:1524px;top:365px;width:6px;height:963px;background:#e1e7f0"></div>
<div style="left:557px;top:392px;width:680px;height:20px;border:1px solid #b4c6dd;border-bottom:none;border-top-left-radius:4px;border-top-right-radius:4px;box-sizing:border-box;-webkit-mask-image:linear-gradient(#000 0%,#000 40%,transparent 100%);background:linear-gradient(#dfe6ef 0px,#f3f6fa 11px,#fff 16px)"></div>
<div style="left:569px;top:398px;width:430px;height:30px;background:#fff"></div>
<div style="left:1202px;top:398px;width:24px;height:12px;background:#fff"></div>
<div id="t36" class="t " style="left:569px;transform-origin:left top;top:401.84px;font-size:25px;line-height:25px;color:#0c70d2;font-weight:bold;font-family:'Liberation Sans', sans-serif;-webkit-text-stroke:0.1px currentColor;">Container Hierarchical information:</div>
<div style="left:573px;top:452px;width:524px;height:38px;background:#fff;border:1px solid #d9d9d9;border-bottom:1.5px solid #8c8c8c;box-sizing:border-box;border-radius:2px"></div>
<div id="t37" class="t " style="left:577px;transform-origin:left top;top:457.84px;font-size:25px;line-height:25px;color:#a8a8a8;font-weight:normal;font-family:'Liberation Sans', sans-serif;">filter</div>
<svg style="position:absolute;left:1104px;top:457px;" width="26" height="28" viewBox="0 0 26 28"><rect x="1" y="1" width="18" height="19" fill="#dff3ff" stroke="#9aa3b8" stroke-width="1.6"/><rect x="6" y="6" width="19" height="21" fill="#fff" stroke="#7f8aa8" stroke-width="1.8"/><rect x="9" y="15.5" width="13" height="2.2" fill="#1a3366"/></svg>
<svg style="position:absolute;left:1140px;top:457px;" width="27" height="28" viewBox="0 0 27 28"><rect x="1" y="1" width="18" height="19" fill="#dff3ff" stroke="#9aa3b8" stroke-width="1.6"/><rect x="6" y="6" width="19" height="21" fill="#fff" stroke="#7f8aa8" stroke-width="1.8"/><rect x="9" y="15.5" width="13" height="2.2" fill="#1a3366"/><rect x="14.4" y="10" width="2.2" height="13" fill="#1a3366"/></svg>
<svg style="position:absolute;left:1173px;top:454px;" width="31" height="32" viewBox="0 0 31 32"><defs><linearGradient id="lg1" x1="0" y1="0" x2="0" y2="1"><stop offset="0" stop-color="#fff6cc"/><stop offset="1" stop-color="#f2c040"/></linearGradient></defs><polygon points="19,2 22,2 23,6 28,9 30,13 28,17 25,15 23,12 18,16 13,13 12,9 17,7" fill="url(#lg1)" stroke="#c07a10" stroke-width="1.6" stroke-linejoin="round"/><polygon points="12,30 9,30 8,26 3,23 1,19 3,15 6,17 8,20 13,16 18,19 19,23 14,25" fill="url(#lg1)" stroke="#c07a10" stroke-width="1.6" stroke-linejoin="round"/></svg>
<div style="left:573px;top:500px;width:633px;height:774px;background:#fff;border:1px solid #8e8e8e;box-sizing:border-box"></div>
<div style="left:574px;top:604px;width:631px;height:34px;background:#d9d9d9"></div>
<svg style="position:absolute;left:584px;top:515px;" width="18" height="13.5" viewBox="0 0 18 13.5"><polyline points="1.5,2 9.0,10.0 16.5,2" fill="none" stroke="#1f1f1f" stroke-width="2.6" stroke-linecap="round" stroke-linejoin="round"/></svg>
<svg style="position:absolute;left:612px;top:503px;" width="26" height="32" viewBox="0 0 26 32"><defs><linearGradient id="mg" x1="0" y1="0" x2="1" y2="1"><stop offset="0" stop-color="#b9d3ec"/><stop offset="1" stop-color="#4f86c2"/></linearGradient></defs><rect x="0" y="0" width="26" height="32" fill="#3b62a0"/><rect x="2" y="7.5" width="20" height="22.5" fill="url(#mg)"/><rect x="2" y="7.5" width="2" height="22.5" fill="#cfe0f2" opacity=".7"/><rect x="3" y="3" width="20" height="2.5" fill="#eef3f8"/><rect x="7" y="12" width="10" height="2" fill="#f4f8fc"/><rect x="22" y="5.5" width="4" height="26.5" fill="#22406e"/></svg>
<div id="t38" class="t " style="left:647px;transform-origin:left top;top:507.84px;font-size:25px;line-height:25px;color:#000;font-weight:normal;font-family:'Liberation Sans', sans-serif;">CanIfCtrlDrvCfgs</div>
<svg style="position:absolute;left:616px;top:549px;" width="18" height="13.5" viewBox="0 0 18 13.5"><polyline points="1.5,2 9.0,10.0 16.5,2" fill="none" stroke="#1f1f1f" stroke-width="2.6" stroke-linecap="round" stroke-linejoin="round"/></svg>
<svg style="position:absolute;left:644px;top:537px;" width="26" height="32" viewBox="0 0 26 32"><defs><linearGradient id="mg" x1="0" y1="0" x2="1" y2="1"><stop offset="0" stop-color="#b9d3ec"/><stop offset="1" stop-color="#4f86c2"/></linearGradient></defs><rect x="0" y="0" width="26" height="32" fill="#3b62a0"/><rect x="2" y="7.5" width="20" height="22.5" fill="url(#mg)"/><rect x="2" y="7.5" width="2" height="22.5" fill="#cfe0f2" opacity=".7"/><rect x="3" y="3" width="20" height="2.5" fill="#eef3f8"/><rect x="7" y="12" width="10" height="2" fill="#f4f8fc"/><rect x="22" y="5.5" width="4" height="26.5" fill="#22406e"/></svg>
<div id="t39" class="t " style="left:679px;transform-origin:left top;top:541.84px;font-size:25px;line-height:25px;color:#000;font-weight:normal;font-family:'Liberation Sans', sans-serif;">CanIfCtrlDrvCfg</div>
<svg style="position:absolute;left:648px;top:583px;" width="18" height="13.5" viewBox="0 0 18 13.5"><polyline points="1.5,2 9.0,10.0 16.5,2" fill="none" stroke="#1f1f1f" stroke-width="2.6" stroke-linecap="round" stroke-linejoin="round"/></svg>
<svg style="position:absolute;left:676px;top:575px;" width="27" height="24" viewBox="0 0 27 24"><defs><linearGradient id="fg2" x1="0" y1="0" x2="0" y2="1"><stop offset="0" stop-color="#fff6c8"/><stop offset="1" stop-color="#f2c54a"/></linearGradient></defs><path d="M1,3 h8 l2,3 h14 v17 H1 Z" fill="url(#fg2)" stroke="#d9a030" stroke-width="1.6"/><rect x="4" y="8" width="20" height="3" fill="#fff"/></svg>
<div id="t40" class="t " style="left:711px;transform-origin:left top;top:575.84px;font-size:25px;line-height:25px;color:#000;font-weight:normal;font-family:'Liberation Sans', sans-serif;">CanIfCtrlCfgs (1)</div>
<svg style="position:absolute;left:711px;top:608px;" width="22" height="28" viewBox="0 0 22 28"><defs><linearGradient id="fgr" x1="0" y1="0" x2="0" y2="1"><stop offset="0" stop-color="#b5ad8a"/><stop offset="1" stop-color="#7d8fb5"/></linearGradient></defs><path d="M1,1 H15 L21,7 V27 H1 Z" fill="#f4f6fb" stroke="url(#fgr)" stroke-width="1.8"/><path d="M15,1 V7 H21" fill="#e8d7a8" stroke="#c2a460" stroke-width="1.1"/><rect x="4" y="6" width="8" height="1.8" fill="#6a86bb"/><rect x="4" y="10" width="14" height="1.8" fill="#6a86bb"/><rect x="4" y="14" width="14" height="1.8" fill="#6a86bb"/><rect x="4" y="18" width="14" height="1.8" fill="#6a86bb"/><rect x="4" y="22" width="10" height="1.8" fill="#6a86bb"/></svg>
<div id="t41" class="t " style="left:743px;transform-origin:left top;top:609.84px;font-size:25px;line-height:25px;color:#000;font-weight:normal;font-family:'Liberation Sans', sans-serif;">CanIfCtrlCfg_Controller0</div>
<div id="t42" class="t " style="left:1258px;transform-origin:left top;top:395.84px;font-size:25px;line-height:25px;color:#0b63c5;font-weight:normal;font-family:'Liberation Sans', sans-serif;text-decoration:underline;text-underline-offset:3px;text-decoration-thickness:1.5px">Copy Element</div>
<div id="t43" class="t " style="left:1258px;transform-origin:left top;top:436.84px;font-size:25px;line-height:25px;color:#0b63c5;font-weight:normal;font-family:'Liberation Sans', sans-serif;text-decoration:underline;text-underline-offset:3px;text-decoration-thickness:1.5px">ReName Element</div>
<div style="left:1551px;top:376px;width:1427px;height:18px;border:1px solid #b4c6dd;border-bottom:none;border-top-left-radius:4px;border-top-right-radius:4px;box-sizing:border-box;-webkit-mask-image:linear-gradient(#000 0%,#000 40%,transparent 100%);background:linear-gradient(#dfe6ef 0px,#f3f6fa 11px,#fff 16px)"></div>
<div style="left:1562px;top:382px;width:298px;height:30px;background:#fff"></div>
<div id="t44" class="t " style="left:1563px;transform-origin:left top;top:385.84px;font-size:25px;line-height:25px;color:#0c70d2;font-weight:bold;font-family:'Liberation Sans', sans-serif;-webkit-text-stroke:0.1px currentColor;">CanIfCtrlCfg_Controller0</div>
<div id="t45" class="t " style="right:1027px;transform-origin:right top;top:437.84px;font-size:25px;line-height:25px;color:#8f8f8f;font-weight:normal;font-family:'Liberation Sans', sans-serif;">CanIfCtrlId :</div>
<div style="left:2052px;top:433px;width:510px;height:36px;background:#f0f0f0;border:1px solid #dedede;box-sizing:border-box"></div>
<div id="t46" class="t " style="left:2056px;transform-origin:left top;top:437.84px;font-size:25px;line-height:25px;color:#7a7a7a;font-weight:normal;font-family:'Liberation Sans', sans-serif;">CANIF_CANDRV_0_CanIfCtrlCfg_Controller0</div>
<div id="t47" class="t " style="right:1027px;transform-origin:right top;top:484.84px;font-size:25px;line-height:25px;color:#000;font-weight:normal;font-family:'Liberation Sans', sans-serif;">CanIfCtrlWakeupSupport :</div>
<div style="left:2052px;top:484px;width:26px;height:25px;background:#f4f4f4;border:1.5px solid #5a5a5a;box-sizing:border-box;border-radius:4px"></div>
<div id="t48" class="t " style="right:1027px;transform-origin:right top;top:529.84px;font-size:25px;line-height:25px;color:#000;font-weight:normal;font-family:'Liberation Sans', sans-serif;">CanIfCtrlCanCtrlRef :</div>
<div style="left:2052px;top:522px;width:512px;height:39px;background:#fff;border:1px solid #c6c6c6;border-bottom-color:#b0b0b0;box-sizing:border-box;border-radius:2px"></div>
<div id="t49" class="t " style="left:2056px;transform-origin:left top;top:529.84px;font-size:25px;line-height:25px;color:#000;font-weight:normal;font-family:'Liberation Sans', sans-serif;">CanController_0</div>
<svg style="position:absolute;left:2532px;top:536px;" width="16" height="10" viewBox="0 0 16 10"><polyline points="1,1 8,8 15,1" fill="none" stroke="#333" stroke-width="1.6"/></svg>
<div style="left:2565px;top:523px;width:46px;height:40px;background:#fdfdfd;border:1px solid #d0d0d0;box-sizing:border-box;border-radius:3px"></div>
<svg style="position:absolute;left:2576px;top:534px;" width="25" height="20" viewBox="0 0 25 20"><rect x="1" y="2" width="4" height="3" fill="#b03020"/><rect x="1" y="8" width="4" height="3" fill="#b03020"/><rect x="1" y="14" width="4" height="3" fill="#b03020"/><rect x="8" y="2.5" width="16" height="2" fill="#c04030"/><rect x="8" y="8.5" width="16" height="2" fill="#c04030"/><rect x="8" y="14.5" width="16" height="2" fill="#c04030"/></svg>
<div style="left:2614px;top:523px;width:46px;height:40px;background:#fdfdfd;border:1px solid #d0d0d0;box-sizing:border-box;border-radius:3px"></div>
<svg style="position:absolute;left:2624px;top:530px;" width="26" height="26" viewBox="0 0 26 26"><path d="M9,1 h8 v8 h8 v8 h-8 v8 h-8 v-8 h-8 v-8 h8 Z" fill="#7cc83a" stroke="#3a7a10" stroke-width="1.5"/></svg>
<div style="left:1576px;top:581px;width:26px;height:26px;background:#f7f7f7;border:1.5px solid #c8c8c8;box-sizing:border-box;border-radius:4px"></div>
<div id="t50" class="t " style="right:1027px;transform-origin:right top;top:581.84px;font-size:25px;line-height:25px;color:#8f8f8f;font-weight:normal;font-family:'Liberation Sans', sans-serif;">CanIfCtrlPartitionRef :</div>
<div style="left:2052px;top:575px;width:512px;height:38px;background:#f9f9f9;border:1px solid #e3e3e3;box-sizing:border-box"></div>
<svg style="position:absolute;left:2532px;top:588px;" width="16" height="10" viewBox="0 0 16 10"><polyline points="1,1 8,8 15,1" fill="none" stroke="#b0b0b0" stroke-width="1.6"/></svg>
<div style="left:2565px;top:575px;width:46px;height:40px;background:#f9f9f9;border:1px solid #e6e6e6;box-sizing:border-box;border-radius:3px"></div>
<svg style="position:absolute;left:2576px;top:586px;" width="25" height="20" viewBox="0 0 25 20"><rect x="1" y="2" width="4" height="3" fill="#c8c8c8"/><rect x="1" y="8" width="4" height="3" fill="#c8c8c8"/><rect x="1" y="14" width="4" height="3" fill="#c8c8c8"/><rect x="8" y="2.5" width="16" height="2" fill="#c8c8c8"/><rect x="8" y="8.5" width="16" height="2" fill="#c8c8c8"/><rect x="8" y="14.5" width="16" height="2" fill="#c8c8c8"/></svg>
<div style="left:2614px;top:575px;width:46px;height:40px;background:#f9f9f9;border:1px solid #e6e6e6;box-sizing:border-box;border-radius:3px"></div>
<svg style="position:absolute;left:2624px;top:582px;" width="26" height="26" viewBox="0 0 26 26"><path d="M9,1 h8 v8 h8 v8 h-8 v8 h-8 v-8 h-8 v-8 h8 Z" fill="#c8c8c8" stroke="#b0b0b0" stroke-width="1.5"/></svg>
<div style="left:514px;top:1328px;width:2552px;height:42px;background:#f0f0f0"></div>
<div style="left:509px;top:1328px;width:197px;height:42px;background:#fff"></div>
<div style="left:514px;top:1368px;width:190px;height:1px;background:#a3a3a3"></div>
<div style="left:706px;top:1328px;width:2360px;height:1px;background:#a3a3a3"></div>
<div style="left:706px;top:1328px;width:1px;height:41px;background:#a3a3a3"></div>
<div style="left:920px;top:1328px;width:1px;height:41px;background:#a3a3a3"></div>
<div style="left:1072px;top:1328px;width:1px;height:41px;background:#a3a3a3"></div>
<div style="left:1265px;top:1328px;width:1px;height:41px;background:#a3a3a3"></div>
<div style="left:1450px;top:1328px;width:1px;height:41px;background:#a3a3a3"></div>
<div style="left:1652px;top:1328px;width:1px;height:41px;background:#a3a3a3"></div>
<div id="t51" class="t " style="left:522.5px;transform-origin:left top;top:1335.84px;font-size:25px;line-height:25px;color:#000;font-weight:normal;font-family:'Liberation Sans', sans-serif;">CanIfCtrlDrvCfg</div>
<div id="t52" class="t " style="left:716.5px;transform-origin:left top;top:1335.84px;font-size:25px;line-height:25px;color:#000;font-weight:normal;font-family:'Liberation Sans', sans-serif;">CanIfDispatchCfg</div>
<div id="t53" class="t " style="left:930px;transform-origin:left top;top:1335.84px;font-size:25px;line-height:25px;color:#000;font-weight:normal;font-family:'Liberation Sans', sans-serif;">CanIfInitCfg</div>
<div id="t54" class="t " style="left:1082px;transform-origin:left top;top:1335.84px;font-size:25px;line-height:25px;color:#000;font-weight:normal;font-family:'Liberation Sans', sans-serif;">CanIfPrivateCfg</div>
<div id="t55" class="t " style="left:1276px;transform-origin:left top;top:1335.84px;font-size:25px;line-height:25px;color:#000;font-weight:normal;font-family:'Liberation Sans', sans-serif;">CanIfPublicCfg</div>
<div id="t56" class="t " style="left:1460px;transform-origin:left top;top:1335.84px;font-size:25px;line-height:25px;color:#000;font-weight:normal;font-family:'Liberation Sans', sans-serif;">CanIfTrcvDrvCfg</div>
<svg style="position:absolute;left:508px;top:1384px;" width="1777" height="387" viewBox="0 0 1777 387"><path d="M0.5,386.5 V4.5 L4.5,0.5 H1772.5 L1776.5,4.5 V386.5 Z" fill="#f0f0f0" stroke="#a3a3a3" stroke-width="1"/></svg>
<div style="left:816px;top:1424px;width:1468px;height:1px;background:#a3a3a3"></div>
<svg style="position:absolute;left:808px;top:1384px;" width="10" height="42" viewBox="0 0 10 42"><path d="M0,0.5 L4,0.5 L8.5,5 V40.5" fill="none" stroke="#a3a3a3" stroke-width="1"/></svg>
<div style="left:990px;top:1385px;width:1px;height:39px;background:#a3a3a3"></div>
<svg style="position:absolute;left:515px;top:1389px;" width="34" height="32" viewBox="0 0 34 32"><ellipse cx="15" cy="19" rx="13.5" ry="10" fill="none" stroke="#f07070" stroke-width="1.6" stroke-dasharray="2 1.5"/><ellipse cx="14" cy="20" rx="7" ry="4.5" fill="#fff" stroke="#f00" stroke-width="3.4" transform="rotate(-20 14 20)"/><path d="M21,1 L31,17 H11 Z" fill="#fbe27a" stroke="#e0a020" stroke-width="1.5"/><rect x="20" y="6" width="2.5" height="6" fill="#111"/><rect x="20" y="13.5" width="2.5" height="2" fill="#111"/></svg>
<div id="t57" class="t " style="left:557px;transform-origin:left top;top:1393.84px;font-size:25px;line-height:25px;color:#000;font-weight:normal;font-family:'Liberation Sans', sans-serif;">Autosar Validation</div>
<svg style="position:absolute;left:781px;top:1396px;" width="19" height="19" viewBox="0 0 19 19"><path d="M2,1 L6,1 L9.5,4.5 L13,1 L17,1 L17,5 L13.5,8.5 L13.5,10.5 L17,14 L17,18 L13,18 L9.5,14.5 L6,18 L2,18 L2,14 L5.5,10.5 L5.5,8.5 L2,5 Z" fill="#fff" stroke="#5a5a5a" stroke-width="1.0"/></svg>
<svg style="position:absolute;left:828px;top:1391px;" width="29" height="27" viewBox="0 0 29 27"><rect x="1" y="1" width="27" height="25" fill="#f4f6fa" stroke="#4a5a80" stroke-width="2"/><rect x="1" y="1" width="27" height="5" fill="#8a9ac0"/><path d="M8,6 V26 M2,11 H28 M2,16 H28 M2,21 H28" stroke="#a0acc8" stroke-width="1.3"/></svg>
<div id="t58" class="t " style="left:867px;transform-origin:left top;top:1393.84px;font-size:25px;line-height:25px;color:#000;font-weight:normal;font-family:'Liberation Sans', sans-serif;">Properties</div>
<svg style="position:absolute;left:2209px;top:1393px;" width="20" height="8" viewBox="0 0 20 8"><rect x="0.75" y="0.75" width="18.5" height="6.5" fill="#fff" stroke="#555" stroke-width="1.2"/></svg>
<svg style="position:absolute;left:2248px;top:1393px;" width="20" height="20" viewBox="0 0 20 20"><rect x="0.75" y="0.75" width="18.5" height="18.5" fill="#fff" stroke="#555" stroke-width="1.2"/><line x1="0" y1="4.2" x2="20" y2="4.2" stroke="#555" stroke-width="1.2"/></svg>
<div id="t59" class="t " style="left:2021px;transform-origin:left top;top:1438.84px;font-size:25px;line-height:25px;color:#000;font-weight:normal;font-family:'Liberation Sans', sans-serif;">Configure Filters...</div>
<svg style="position:absolute;left:2254px;top:1437px;" width="19" height="13" viewBox="0 0 19 13"><line x1="0" y1="1.5" x2="19" y2="1.5" stroke="#707070" stroke-width="1.4"/><polygon points="5,4 14,4 9.5,8" fill="#d4d4d4"/><rect x="8.5" y="9" width="2" height="2" fill="#707070"/></svg>
<div id="t60" class="t " style="left:514px;transform-origin:left top;top:1473.34px;font-size:25px;line-height:25px;color:#000;font-weight:normal;font-family:'Liberation Sans', sans-serif;">0 errors, 0 warnings, 0 infos</div>
<div style="left:514px;top:1502px;width:1766px;height:1px;background:#a0a0a0"></div>
<div style="left:514px;top:1503px;width:1766px;height:40px;background:#fff"></div>
<div id="t61" class="t " style="left:521px;transform-origin:left top;top:1511.84px;font-size:25px;line-height:25px;color:#000;font-weight:normal;font-family:'Liberation Sans', sans-serif;">Description</div>
<svg style="position:absolute;left:1387.5px;top:1506px;" width="15" height="9" viewBox="0 0 15 9"><polyline points="1,8 7.5,1.2 14,8" fill="none" stroke="#444" stroke-width="1.3"/></svg>
<div style="left:514px;top:1543px;width:1766px;height:189px;background:#f7f7f7"></div>
<div style="left:514px;top:1576px;width:1766px;height:1px;background:#e3e3e3"></div>
<div style="left:514px;top:1610px;width:1766px;height:1px;background:#e3e3e3"></div>
<div style="left:514px;top:1644px;width:1766px;height:1px;background:#e3e3e3"></div>
<div style="left:514px;top:1678px;width:1766px;height:1px;background:#e3e3e3"></div>
<div style="left:514px;top:1712px;width:1766px;height:1px;background:#e3e3e3"></div>
<div style="left:2275px;top:1505px;width:1px;height:227px;background:#e6e6e6"></div>
<div style="left:548px;top:1748px;width:1053px;height:5px;background:#858585;border-radius:3px"></div>
<div style="left:509px;top:1430px;width:5px;height:340px;background:#fff"></div>
<div style="left:509px;top:1766px;width:1775px;height:4px;background:#fff"></div>
<div style="left:2280px;top:1430px;width:4px;height:340px;background:#fff"></div>
<svg style="position:absolute;left:2294px;top:1384px;" width="777" height="387" viewBox="0 0 777 387"><path d="M0.5,386.5 V4.5 L4.5,0.5 H772.5 L776.5,4.5 V386.5 Z" fill="#f0f0f0" stroke="#a3a3a3" stroke-width="1"/></svg>
<div style="left:2458px;top:1424px;width:612px;height:1px;background:#a3a3a3"></div>
<svg style="position:absolute;left:2450px;top:1384px;" width="10" height="42" viewBox="0 0 10 42"><path d="M0,0.5 L4,0.5 L8.5,5 V40.5" fill="none" stroke="#a3a3a3" stroke-width="1"/></svg>
<div style="left:2606px;top:1385px;width:1px;height:39px;background:#a3a3a3"></div>
<div style="left:2748px;top:1385px;width:1px;height:39px;background:#a3a3a3"></div>
<svg style="position:absolute;left:2304px;top:1390px;" width="31" height="33" viewBox="0 0 31 33"><rect x="1" y="1" width="26" height="31" fill="#fafafa" stroke="#c8c8c8" stroke-width="1.4"/><path d="M5,29 L8,21 L24,5 L29,10 L13,26 Z" fill="#f5c040" stroke="#a07010" stroke-width="1.2"/><path d="M5,29 L8,21 L13,26 Z" fill="#e0c090"/></svg>
<div id="t62" class="t " style="left:2343px;transform-origin:left top;top:1393.84px;font-size:25px;line-height:25px;color:#000;font-weight:normal;font-family:'Liberation Sans', sans-serif;">Detail</div>
<svg style="position:absolute;left:2421px;top:1396px;" width="19" height="19" viewBox="0 0 19 19"><path d="M2,1 L6,1 L9.5,4.5 L13,1 L17,1 L17,5 L13.5,8.5 L13.5,10.5 L17,14 L17,18 L13,18 L9.5,14.5 L6,18 L2,18 L2,14 L5.5,10.5 L5.5,8.5 L2,5 Z" fill="#fff" stroke="#5a5a5a" stroke-width="1.0"/></svg>
<svg style="position:absolute;left:2471px;top:1392px;" width="28" height="27" viewBox="0 0 28 27"><rect x="1" y="1" width="26" height="19" rx="2" fill="#3a70c8" stroke="#1a3a80" stroke-width="1.6"/><rect x="4" y="4" width="20" height="13" fill="#e8f0fa"/><path d="M7,8 h10 M7,12 h7" stroke="#3a5aa0" stroke-width="1.6"/><rect x="11" y="20" width="6" height="3" fill="#2a4a90"/><rect x="6" y="23" width="16" height="3" fill="#2a4a90"/></svg>
<div id="t63" class="t " style="left:2508px;transform-origin:left top;top:1393.84px;font-size:25px;line-height:25px;color:#000;font-weight:normal;font-family:'Liberation Sans', sans-serif;">Console</div>
<svg style="position:absolute;left:2617px;top:1391px;" width="28" height="29" viewBox="0 0 28 29"><rect x="1" y="1" width="9" height="9" fill="#fff" stroke="#3a7ad0" stroke-width="2"/><rect x="1" y="19" width="9" height="9" fill="#5a9ae0" stroke="#3a7ad0" stroke-width="2"/><path d="M5,10 V19" stroke="#3a7ad0" stroke-width="2"/><path d="M13,7 h14 M13,23 h14 M15,14 h4 M22,14 h5" stroke="#3a7ad0" stroke-width="2"/><rect x="18" y="12" width="4" height="4" fill="#fff" stroke="#3a7ad0" stroke-width="1.4"/></svg>
<div id="t64" class="t " style="left:2655px;transform-origin:left top;top:1393.84px;font-size:25px;line-height:25px;color:#000;font-weight:normal;font-family:'Liberation Sans', sans-serif;">Outline</div>
<svg style="position:absolute;left:2995px;top:1393px;" width="20" height="8" viewBox="0 0 20 8"><rect x="0.75" y="0.75" width="18.5" height="6.5" fill="#fff" stroke="#555" stroke-width="1.2"/></svg>
<svg style="position:absolute;left:3034px;top:1393px;" width="20" height="20" viewBox="0 0 20 20"><rect x="0.75" y="0.75" width="18.5" height="18.5" fill="#fff" stroke="#555" stroke-width="1.2"/><line x1="0" y1="4.2" x2="20" y2="4.2" stroke="#555" stroke-width="1.2"/></svg>
<div style="left:2295px;top:1430px;width:774px;height:339px;background:#fff"></div>
<div style="left:2295px;top:1430px;width:737px;height:336px;overflow:hidden"><div class="t" style="left:21px;top:17px;font-family:'Liberation Serif',serif;font-size:38px;font-weight:bold;line-height:38px;transform-origin:left top;-webkit-text-stroke:0" id="dethead">CanIfCtrlCanCtrlRef</div><div style="position:absolute;left:21px;top:95.5px;width:760px;font-family:'Liberation Serif',serif;font-size:32px;line-height:36.8px;white-space:pre;-webkit-text-stroke:0.3px #000">This parameter references to the logical handle of the
underlying CAN controller from the CAN Driver
module to be served by the CAN Interface module.
The following parameters of CanController config
container shall be referenced by this link:
CanControllerId, CanWakeupSourceRef
Range: 0..max. number of underlying supported CAN</div></div>
<div style="left:3032px;top:1430px;width:35px;height:336px;background:#f0f0f0"></div>
<svg style="position:absolute;left:3038px;top:1442px;" width="22" height="17" viewBox="0 0 22 17"><polyline points="2,15 11,5 20,15" fill="none" stroke="#666" stroke-width="3.6"/></svg>
<svg style="position:absolute;left:3038px;top:1735px;" width="22" height="17" viewBox="0 0 22 17"><polyline points="2,2 11,12 20,2" fill="none" stroke="#666" stroke-width="3.6"/></svg>
<div style="left:3033px;top:1464px;width:32px;height:221px;background:#cdcdcd"></div>
<svg style="position:absolute;left:8px;top:1781px;" width="29" height="25" viewBox="0 0 29 25"><path d="M1,4 Q1,1 4,1 H10 L12,3 V5 H1 Z" fill="#a8d890" stroke="#5a9a40" stroke-width="1.2"/><rect x="1" y="5" width="27" height="19" fill="#8fd468" stroke="#5a9a40" stroke-width="1.4"/></svg>
<div id="t65" class="t " style="left:48px;transform-origin:left top;top:1780.84px;font-size:25px;line-height:25px;color:#000;font-weight:normal;font-family:'Liberation Sans', sans-serif;">CanIfCtrlCfg_Controller0</div>
<div style="left:2502px;top:1784px;width:4px;height:4px;background:linear-gradient(#c4bfae,#8a8470)"></div>
<div style="left:2502px;top:1791px;width:4px;height:4px;background:linear-gradient(#c4bfae,#8a8470)"></div>
<div style="left:2502px;top:1799px;width:4px;height:4px;background:linear-gradient(#c4bfae,#8a8470)"></div>
<div style="left:2502px;top:1806px;width:4px;height:4px;background:linear-gradient(#c4bfae,#8a8470)"></div>
</body></html>
